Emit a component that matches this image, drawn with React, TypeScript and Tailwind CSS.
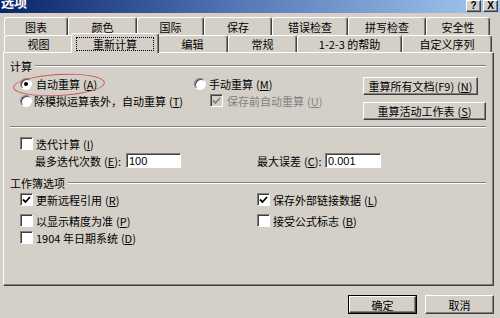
import type { ReactNode } from "react"

const raised = "border-t border-l border-t-white border-l-white border-r border-b border-r-[#404040] border-b-[#404040] shadow-[inset_-1px_-1px_0_#808080]"
const sunken = "border-t border-l border-t-[#808080] border-l-[#808080] border-r border-b border-r-white border-b-white shadow-[inset_1px_1px_0_#404040]"

function Key({ k }: { k: string }) {
  return (
    <span className="ml-[3px]">
      (<span className="underline">{k}</span>)
    </span>
  )
}

function Tab({ w, children }: { w: string; children: ReactNode }) {
  return (
    <div className={`${w} h-full flex items-center justify-center border-t border-l border-t-white border-l-white border-r border-r-[#404040] shadow-[inset_-1px_0_0_#808080] rounded-t-[3px]`}>
      {children}
    </div>
  )
}

function Radio({ on }: { on?: boolean }) {
  return (
    <div className="w-[12px] h-[12px] rounded-full border border-t-[#808080] border-l-[#808080] border-b-white border-r-white bg-white shadow-[inset_1px_1px_0_#404040] flex items-center justify-center shrink-0">
      {on && <div className="w-[4px] h-[4px] rounded-full bg-black" />}
    </div>
  )
}

function Check({ on, disabled }: { on?: boolean; disabled?: boolean }) {
  return (
    <div className={`w-[13px] h-[13px] ${sunken} ${disabled ? "bg-[#d4d0c8]" : "bg-white"} flex items-center justify-center shrink-0`}>
      {on && (
        <svg width="9" height="8" viewBox="0 0 9 8">
          <path d="M1 3.5 L3.5 6 L8 1" fill="none" stroke={disabled ? "#808080" : "#000"} strokeWidth="1.8" />
        </svg>
      )}
    </div>
  )
}

function Heading({ label }: { label: string }) {
  return (
    <div className="h-[14px] flex items-center">
      <span>{label}</span>
      <div className="flex-1 ml-[3px] mr-[7px] border-t border-t-[#808080] border-b border-b-white" />
    </div>
  )
}

export default function App() {
  return (
    <div className="w-[500px] h-[318px] bg-[#d4d0c8] overflow-hidden flex flex-col text-[11px] leading-[14px] text-black font-['Noto_Sans_CJK_SC',sans-serif]">
      {/* title bar */}
      <div className="h-[13px] shrink-0 bg-gradient-to-r from-[#0a246a] via-[#5a7ab8] to-[#a6caf0] flex items-start justify-between overflow-hidden">
        <span className="-mt-[6px] ml-[1px] text-white font-bold text-[13px] leading-[16px]">选项</span>
        <div className="flex gap-[2px] mr-[2px]">
          <div className={`w-[15px] h-[12px] bg-[#d4d0c8] ${raised} flex items-center justify-center text-[10px] leading-[10px] font-bold font-['Liberation_Sans',sans-serif]`}>?</div>
          <div className={`w-[15px] h-[12px] bg-[#d4d0c8] ${raised} flex items-center justify-center text-[10px] leading-[10px] font-bold font-['Liberation_Sans',sans-serif]`}>X</div>
        </div>
      </div>

      {/* tabs */}
      <div className="pt-[4px] shrink-0">
        <div className="flex pl-[4px] h-[18px]">
          <Tab w="w-[64px]">图表</Tab>
          <Tab w="w-[69px]">颜色</Tab>
          <Tab w="w-[67px]">国际</Tab>
          <Tab w="w-[68px]">保存</Tab>
          <Tab w="w-[76px]">错误检查</Tab>
          <Tab w="w-[78px]">拼写检查</Tab>
          <Tab w="w-[64px]">安全性</Tab>
        </div>
        <div className="flex pl-[4px] h-[17px]">
          <Tab w="w-[69px]">视图</Tab>
          <div className="relative z-10 w-[88px] h-[20px] -mx-[2px] -mt-[2px] bg-[#d4d0c8] border-t border-l border-t-white border-l-white border-r border-r-[#404040] shadow-[inset_-1px_0_0_#808080] rounded-t-[3px] pt-[3px] px-[4px]">
            <div className="h-[14px] border border-dotted border-black flex items-center justify-center">重新计算</div>
          </div>
          <Tab w="w-[71px]">编辑</Tab>
          <Tab w="w-[69px]">常规</Tab>
          <Tab w="w-[105px]">1-2-3 的帮助</Tab>
          <Tab w="w-[90px]">自定义序列</Tab>
        </div>
      </div>

      {/* panel */}
      <div className="relative ml-[3px] w-[491px] h-[234px] shrink-0 border-t border-l border-t-white border-l-white border-r border-b border-r-[#404040] border-b-[#404040] shadow-[inset_-1px_-1px_0_#808080] pl-[6px]">
        <div className="mt-[6px]">
          <Heading label="计算" />
        </div>

        <div className="flex mt-[2px]">
          <div className="w-[184px] pl-[10px]">
            <div className="h-[17px] flex items-center gap-[4px]">
              <Radio on />
              <span>自动重算<Key k="A" /></span>
            </div>
            <div className="h-[17px] flex items-center gap-[2px]">
              <Radio />
              <span>除模拟运算表外，自动重算<Key k="T" /></span>
            </div>
          </div>
          <div className="w-[169px]">
            <div className="h-[17px] flex items-center gap-[3px]">
              <Radio />
              <span>手动重算<Key k="M" /></span>
            </div>
            <div className="h-[17px] flex items-center gap-[4px] pl-[16px] text-[#808080]">
              <Check on disabled />
              <span>保存前自动重算<Key k="U" /></span>
            </div>
          </div>
          <div className="flex flex-col">
            <div className={`mt-[2px] w-[115px] h-[18px] ${raised} flex items-center justify-center`}>
              重算所有文档(F9)<Key k="N" />
            </div>
            <div className={`mt-[7px] w-[123px] h-[18px] ${raised} flex items-center justify-center`}>
              重算活动工作表<Key k="S" />
            </div>
          </div>
        </div>

        <div className="mt-[6px] mr-[7px] border-t border-t-[#808080] border-b border-b-white" />

        <div className="mt-[7px] pl-[10px] h-[17px] flex items-center gap-[3px]">
          <Check />
          <span>迭代计算<Key k="I" /></span>
        </div>
        <div className="pl-[25px] h-[17px] flex items-center">
          <span className="w-[91px]">最多迭代次数<Key k="E" />:</span>
          <div className={`w-[55px] h-[15px] bg-white ${sunken} pl-[2px] flex items-center font-['Liberation_Sans',sans-serif]`}>100</div>
          <span className="ml-[76px] w-[68px]">最大误差<Key k="C" />:</span>
          <div className={`w-[56px] h-[15px] bg-white ${sunken} pl-[2px] flex items-center font-['Liberation_Sans',sans-serif]`}>0.001</div>
        </div>

        <div className="mt-[7px]">
          <Heading label="工作簿选项" />
        </div>

        <div className="flex pl-[10px] mt-[1px]">
          <div className="w-[237px]">
            <div className="h-[17px] flex items-center gap-[3px]">
              <Check on />
              <span>更新远程引用<Key k="R" /></span>
            </div>
            <div className="mt-[4px] h-[17px] flex items-center gap-[3px]">
              <Check />
              <span>以显示精度为准<Key k="P" /></span>
            </div>
            <div className="h-[17px] flex items-center gap-[3px]">
              <Check />
              <span>1904 年日期系统<Key k="D" /></span>
            </div>
          </div>
          <div>
            <div className="h-[17px] flex items-center gap-[3px]">
              <Check on />
              <span>保存外部链接数据<Key k="L" /></span>
            </div>
            <div className="mt-[4px] h-[17px] flex items-center gap-[3px]">
              <Check />
              <span>接受公式标志<Key k="B" /></span>
            </div>
          </div>
        </div>

        {/* red hand-drawn circle */}
        <div className="absolute left-[9px] top-[21px] w-[92px] h-[22px] rounded-[50%] border border-[#c85a5a] -rotate-3" />
      </div>

      {/* footer */}
      <div className="flex justify-end gap-[8px] pr-[6px] pt-[9px]">
        <div className="w-[69px] h-[19px] border border-black">
          <div className={`w-full h-full ${raised} flex items-center justify-center`}>确定</div>
        </div>
        <div className={`w-[69px] h-[19px] ${raised} flex items-center justify-center`}>取消</div>
      </div>
    </div>
  )
}
